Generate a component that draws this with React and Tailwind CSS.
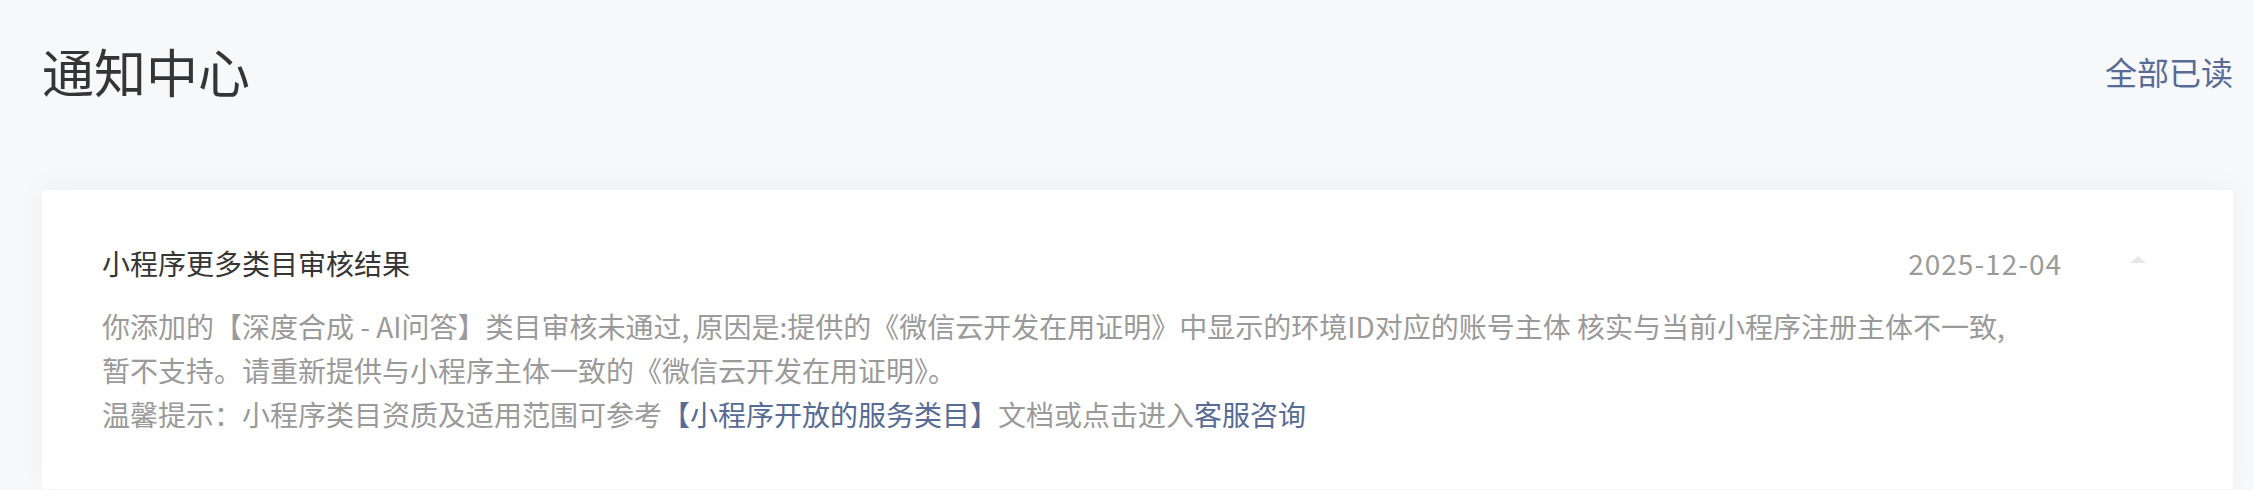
import React from 'react';

const font = { fontFamily: '"Noto Sans CJK SC", "Noto Sans", sans-serif' };

const NoticeCard = ({ title, date, children }) => (
  <div className="bg-white shadow-[0_-6px_24px_rgba(0,0,0,0.035)] pl-[60px] pr-[87px] pt-[53px] pb-[53px]">
    <div className="flex items-center h-[40px]">
      <div className="flex-1 text-[28px] text-[#353535] leading-[40px]">{title}</div>
      <div className="text-[28px] text-[#9a9a9a] leading-[40px] tracking-[1px]">{date}</div>
      <div className="ml-[68px] w-0 h-0 border-l-[8px] border-r-[8px] border-b-[7px] border-l-transparent border-r-transparent border-b-[#e6e6ea] -mt-[7px]" />
    </div>
    <div className="mt-[21px] text-[28px] leading-[44px] text-[#9a9a9a]">{children}</div>
  </div>
);

export default function App() {
  return (
    <div className="min-h-screen bg-[#f7f8fa] pl-[42px] pr-[21px]" style={font}>
      <div className="flex items-center justify-between h-[150px] pb-[8px]">
        <h1 className="text-[52px] text-[#353535] font-normal leading-none">通知中心</h1>
        <button className="text-[32px] text-[#576b95] leading-none">全部已读</button>
      </div>
      <div className="mt-[40px]">
        <NoticeCard title="小程序更多类目审核结果" date="2025-12-04">
          <p>你添加的【深度合成 - AI问答】类目审核未通过, 原因是:提供的《微信云开发在用证明》中显示的环境ID对应的账号主体 核实与当前小程序注册主体不一致,</p>
          <p>暂不支持。请重新提供与小程序主体一致的《微信云开发在用证明》。</p>
          <p>
            温馨提示：小程序类目资质及适用范围可参考<span className="text-[#576b95]">【小程序开放的服务类目】</span>文档或点击进入<span className="text-[#576b95]">客服咨询</span>
          </p>
        </NoticeCard>
      </div>
    </div>
  );
}
